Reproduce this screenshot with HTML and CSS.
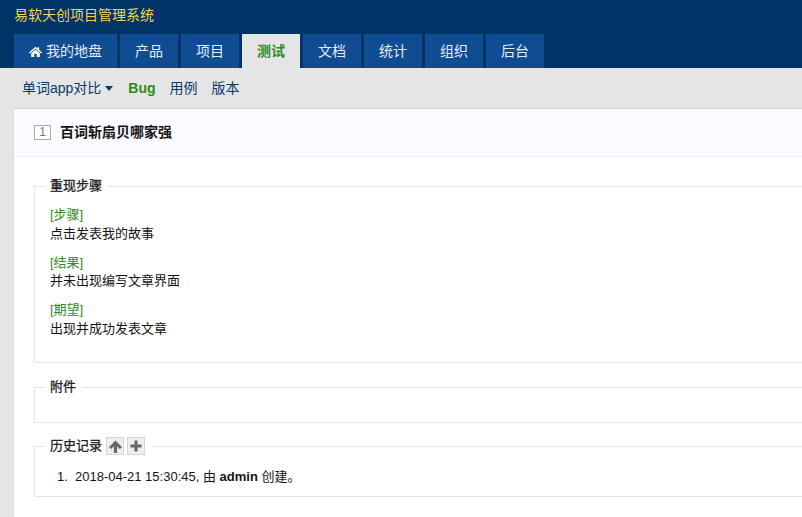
FILE: index.html
```html
<!DOCTYPE html>
<html lang="zh-CN">
<head>
<meta charset="utf-8">
<title>百词斩扇贝哪家强</title>
<link rel="stylesheet" href="styles.css">
</head>
<body>
<header class="header">
  <div class="brand">易软天创项目管理系统</div>
  <nav class="tabs">
    <a class="tab tab-home"><svg class="home-icon" viewBox="0 0 12 10" width="13" height="11"><path d="M6 0.6 L7.9 2.3 V1 H9.4 V3.6 L12 6 L11.2 6.8 L6 2.2 L0.8 6.8 L0 6 Z M2 6.6 L6 3.1 L10 6.6 V10 H7.2 V7.4 H4.8 V10 H2 Z" fill="#fff"/></svg>我的地盘</a>
    <a class="tab">产品</a>
    <a class="tab">项目</a>
    <a class="tab tab-active">测试</a>
    <a class="tab">文档</a>
    <a class="tab">统计</a>
    <a class="tab">组织</a>
    <a class="tab">后台</a>
  </nav>
</header>
<nav class="subnav">
  <a class="sub-link sub-drop">单词app对比<span class="caret"></span></a>
  <a class="sub-link sub-active">Bug</a>
  <a class="sub-link">用例</a>
  <a class="sub-link">版本</a>
</nav>
<main class="card">
  <div class="card-head">
    <span class="id-box">1</span>
    <strong class="title">百词斩扇贝哪家强</strong>
  </div>
  <div class="card-body">
    <fieldset class="group group-steps">
      <legend class="legend">重现步骤</legend>
      <p class="step"><span class="step-label">[步骤]</span><br>点击发表我的故事</p>
      <p class="step"><span class="step-label">[结果]</span><br>并未出现编写文章界面</p>
      <p class="step"><span class="step-label">[期望]</span><br>出现并成功发表文章</p>
    </fieldset>
    <fieldset class="group group-files">
      <legend class="legend">附件</legend>
    </fieldset>
    <fieldset class="group group-history">
      <legend class="legend legend-history">历史记录<button class="mini-btn" type="button"><svg viewBox="0 0 12 12" width="13" height="13"><path d="M6 0.5 L12 6.5 L10 8.3 L7.5 5.8 V12 H4.5 V5.8 L2 8.3 L0 6.5 Z" fill="#666"/></svg></button><button class="mini-btn" type="button"><svg viewBox="0 0 12 12" width="12" height="12"><path d="M4.5 0.5 H7.5 V4.5 H11.5 V7.5 H7.5 V11.5 H4.5 V7.5 H0.5 V4.5 H4.5 Z" fill="#666"/></svg></button></legend>
      <ol class="history">
        <li>2018-04-21 15:30:45, 由 <strong>admin</strong> 创建。</li>
      </ol>
    </fieldset>
  </div>
</main>
</body>
</html>
```
FILE: styles.css
```css
* { box-sizing: border-box; }
html, body { margin: 0; height: 100%; overflow: hidden; }
body {
  background: #e5e5e5;
  color: #141414;
  font: 13px/20px "Liberation Sans", "Noto Sans CJK SC", sans-serif;
}
.header { height: 68px; background: #036; display: flex; flex-direction: column; padding-left: 14px; }
.brand { height: 34px; padding-top: 5px; color: #f1d54b; font-size: 14px; line-height: 20px; }
.tabs { display: flex; gap: 3px; height: 34px; }
.tab {
  display: flex; align-items: center; justify-content: center;
  width: 58px; background: #0f4c92; color: #e4edf7; font-size: 14px;
}
.tab-home { width: 103px; }
.home-icon { margin-right: 4px; }
.tab-active { background: #e5e5e5; color: #2e8b1e; font-weight: 700; }
.subnav { height: 40px; display: flex; align-items: center; padding-left: 22px; gap: 14px; }
.sub-link { color: #0b3a6b; font-size: 14px; }
.sub-drop { display: flex; align-items: center; margin-right: 1px; }
.caret {
  display: inline-block; margin-left: 4px; margin-top: 1px;
  border-left: 4px solid transparent; border-right: 4px solid transparent; border-top: 5px solid #0b3a6b;
}
.sub-active { color: #2e8b1e; font-weight: 700; }
.card {
  margin-left: 13px; background: #fff;
  border-top: 1px solid #cfcfcf; border-left: 1px solid #ddd;
  height: 409px;
}
.card-head {
  height: 48px; background: #fafaff; border-bottom: 1px solid #eeeef2;
  display: flex; align-items: center; padding-left: 20px;
}
.id-box {
  width: 17px; height: 15px; border: 1px solid #a8a8a8; background: #fff;
  color: #777; font-size: 12px; line-height: 13px; text-align: center;
}
.title { margin-left: 9px; padding-bottom: 2px; font-size: 14px; color: #141414; }
.card-body { padding: 19px 0 0 20px; }
.group {
  margin: 0 -4px 0 0; padding: 0 15px; min-width: 0;
  border: 1px solid #e5e5e5; border-right: 0;
}
.group-steps { height: 187px; margin-bottom: 14px; }
.group-files { height: 46px; margin-bottom: 13px; }
.group-history { height: 61px; }
.legend { margin-left: -5px; padding: 0 6px 0 5px; color: #222; line-height: 20px; -webkit-text-stroke: 0.3px #222; }
.legend-history { display: flex; align-items: center; }
.step { margin: 0 0 10.4px; line-height: 18.57px; color: #141414; }
.step:first-of-type { margin-top: 10px; }
.step-label { color: #2e8b1e; }
.mini-btn {
  width: 18px; height: 18px; padding: 0; margin-left: 3px;
  display: inline-flex; align-items: center; justify-content: center;
  background: #eee; border: 1px solid #d5d5d5;
}
.mini-btn:first-of-type { margin-left: 4px; }
.history { margin: 11px 0 0; padding-left: 25px; }
.history li::marker { content: "1.  "; }
```
